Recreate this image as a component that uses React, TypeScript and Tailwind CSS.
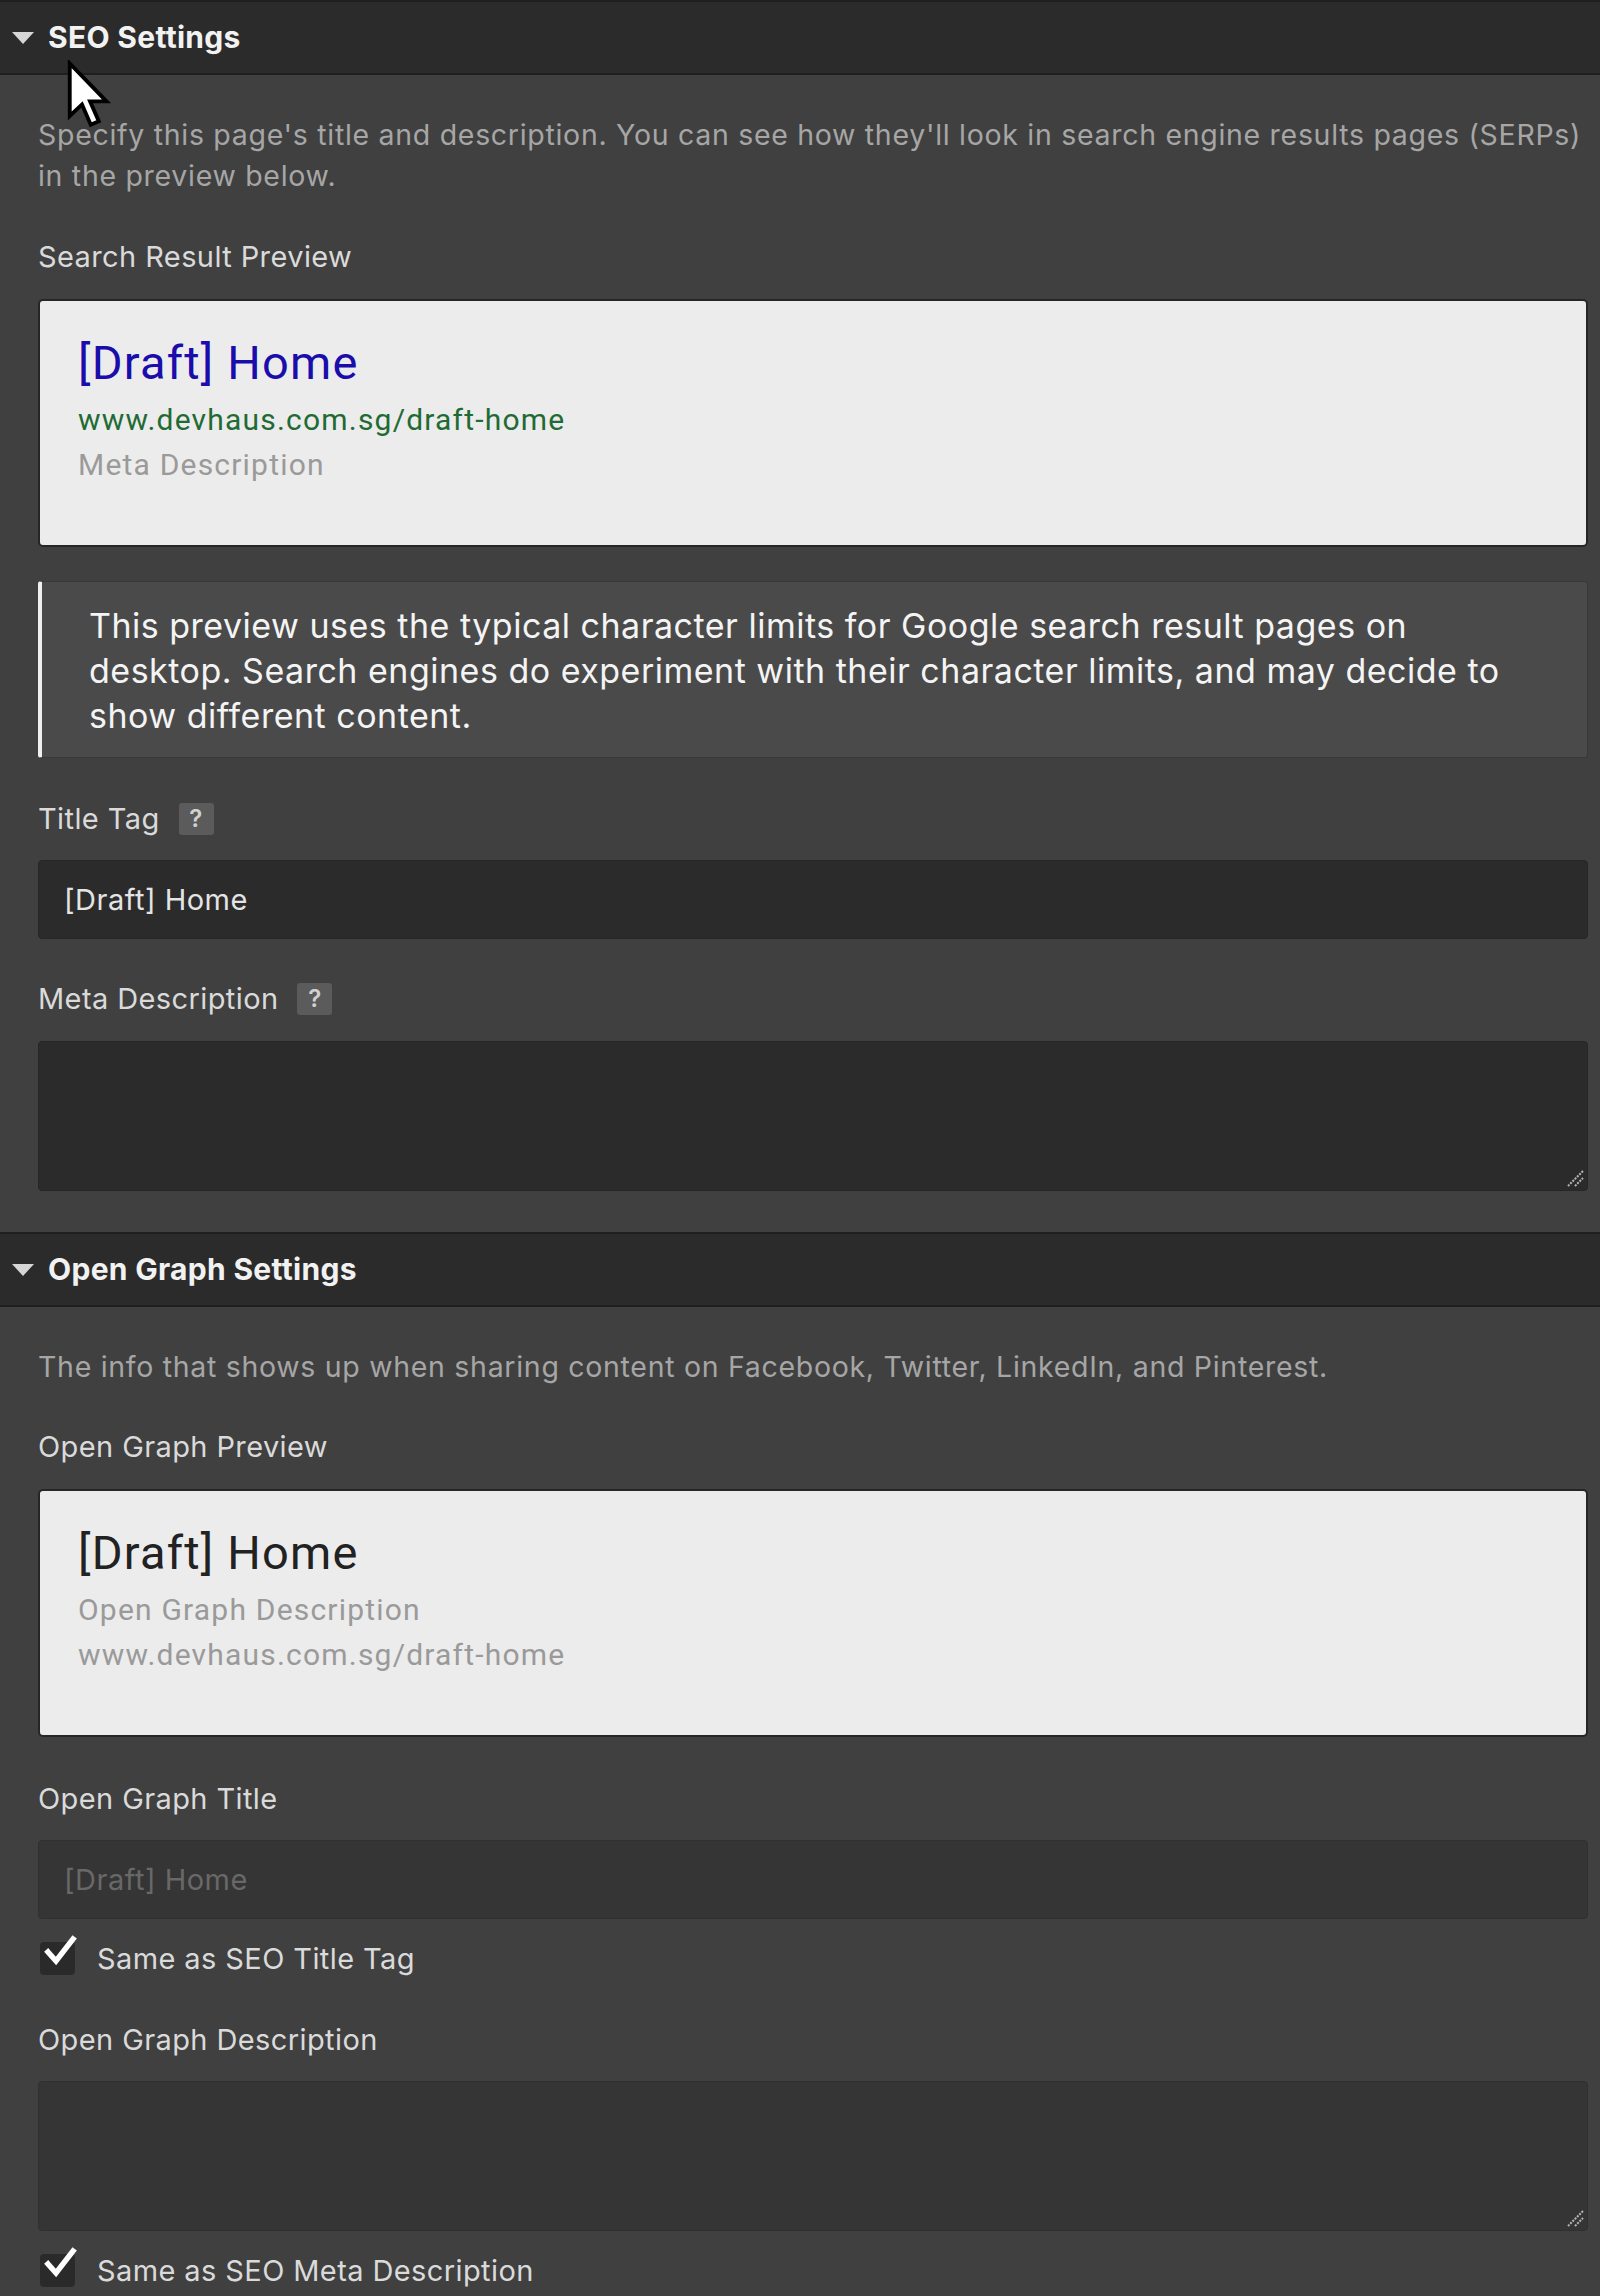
import React from 'react';

const panelFont = { fontFamily: 'Inter, "Noto Sans", sans-serif' };
const cardFont = { fontFamily: 'Roboto, Arial, sans-serif' };

// Collapsible section header bar with the disclosure triangle
const SectionHeader: React.FC<{ title: string }> = ({ title }) => (
  <div className="flex h-[75px] items-center border-y-2 border-[#1f1f1f] bg-[#2b2b2b]">
    <svg width="24" height="14" viewBox="0 0 24 14" className="ml-[11px] mr-[13px]">
      <path d="M1 1 L23 1 L12 13 Z" fill="#d6d6d6" />
    </svg>
    <span className="text-[30px] font-bold tracking-[0.3px] text-[#f2f2f2]">{title}</span>
  </div>
);

const HelpBadge = () => (
  <span className="ml-[19px] inline-flex h-[32px] w-[35px] items-center justify-center rounded-[3px] bg-[#5b5b5b] text-[24px] font-semibold text-[#d0d0d0]">
    ?
  </span>
);

const Label: React.FC<{ text: string; help?: boolean; className?: string }> = ({ text, help, className = '' }) => (
  <div className={`flex h-[41px] items-center text-[29px] tracking-[0.4px] text-[#dadada] ${className}`}>
    {text}
    {help && <HelpBadge />}
  </div>
);

const Checkbox: React.FC<{ label: string; className?: string }> = ({ label, className = '' }) => (
  <div className={`flex h-[41px] items-center ${className}`}>
    <span className="relative ml-[2px] h-[33px] w-[35px] shrink-0 rounded-[4px] bg-[#2a2a2a]">
      <svg width="36" height="34" viewBox="0 0 36 34" className="absolute left-[3px] top-[-8px]">
        <path d="M5 18 L13 27 L30 5" fill="none" stroke="#ffffff" strokeWidth="5.5" strokeLinecap="square" />
      </svg>
    </span>
    <span className="ml-[22px] text-[29px] tracking-[0.4px] text-[#dadada]">{label}</span>
  </div>
);

// Drag grip drawn in the lower right corner of the text areas
const ResizeGrip = () => (
  <svg width="20" height="20" viewBox="0 0 20 20" className="pointer-events-none absolute bottom-[3px] right-[3px]">
    <path d="M3 18 L18 3" stroke="#b5b5b5" strokeWidth="2" strokeDasharray="2 1.2" />
    <path d="M10 18 L18 10" stroke="#b5b5b5" strokeWidth="2" strokeDasharray="2 1.2" />
  </svg>
);

const TextArea: React.FC<{ disabled?: boolean; className?: string }> = ({ disabled, className = '' }) => (
  <div className={`relative ${className}`}>
    <textarea
      readOnly
      disabled={disabled}
      className={`block h-[150px] w-full resize-none rounded-[4px] border px-[25px] py-[18px] text-[29px] text-[#e4e4e4] outline-none ${
        disabled ? 'border-[#303030] bg-[#353535]' : 'border-[#262626] bg-[#2b2b2b]'
      }`}
    />
    <ResizeGrip />
  </div>
);

const Cursor = () => (
  <svg width="46" height="70" viewBox="0 0 13 20" className="absolute left-[66px] top-[60px]">
    <path
      d="M1 1 L1 16 L4.5 12.7 L7 18.5 L9.3 17.5 L6.8 11.8 L11.5 11.8 Z"
      fill="#ffffff"
      stroke="#000000"
      strokeWidth="1.1"
      strokeLinejoin="miter"
    />
  </svg>
);

export default function App() {
  return (
    <div className="relative min-h-[2296px] w-[1600px] bg-[#404040]" style={panelFont}>
      <SectionHeader title="SEO Settings" />
      <Cursor />

      <div className="pb-[41px] pl-[38px] pr-[12px] pt-[39px]">
        <p className="text-[28.5px] leading-[41px] tracking-[0.7px] text-[#a6a6a6]">
          Specify this page's title and description. You can see how they'll look in search engine results pages (SERPs) in the preview below.
        </p>

        <Label text="Search Result Preview" className="mt-[40px]" />

        <div className="mt-[22px] h-[248px] rounded-[5px] border-2 border-[#262626] bg-[#ececec] px-[38px] pt-[34px]" style={cardFont}>
          <div className="text-[47px] leading-[56px] tracking-[1.2px] text-[#1a0dab]">[Draft] Home</div>
          <div className="mt-[6px] text-[30px] leading-[45px] tracking-[1.2px] text-[#1f6b33]">www.devhaus.com.sg/draft-home</div>
          <div className="text-[30px] leading-[45px] tracking-[1.2px] text-[#9a9a9a]">Meta Description</div>
        </div>

        <div className="mt-[34px] h-[177px] rounded-[3px] border border-[#383838] border-l-[4px] border-l-[#f0f0f0] bg-[#4a4a4a] pl-[47px] pr-[63px] pt-[21px] text-[34px] leading-[45px] tracking-[0.5px] text-[#f4f4f4]">
          This preview uses the typical character limits for Google search result pages on desktop. Search engines do experiment with their character limits, and may decide to show different content.
        </div>

        <Label text="Title Tag" help className="mt-[40px]" />
        <input
          readOnly
          defaultValue="[Draft] Home"
          className="mt-[21px] block h-[79px] w-full rounded-[4px] border border-[#262626] bg-[#2b2b2b] px-[25px] text-[29px] tracking-[0.5px] text-[#e4e4e4] outline-none"
        />

        <Label text="Meta Description" help className="mt-[39px]" />
        <TextArea className="mt-[22px]" />
      </div>

      <SectionHeader title="Open Graph Settings" />

      <div className="pb-[6px] pl-[38px] pr-[12px] pt-[39px]">
        <p className="text-[28.5px] leading-[41px] tracking-[0.7px] text-[#a6a6a6]">
          The info that shows up when sharing content on Facebook, Twitter, LinkedIn, and Pinterest.
        </p>

        <Label text="Open Graph Preview" className="mt-[39px]" />

        <div className="mt-[22px] h-[248px] rounded-[5px] border-2 border-[#262626] bg-[#ececec] px-[38px] pt-[34px]" style={cardFont}>
          <div className="text-[47px] leading-[56px] tracking-[1.2px] text-[#222222]">[Draft] Home</div>
          <div className="mt-[6px] text-[30px] leading-[45px] tracking-[1.2px] text-[#9a9a9a]">Open Graph Description</div>
          <div className="text-[30px] leading-[45px] tracking-[1.2px] text-[#9a9a9a]">www.devhaus.com.sg/draft-home</div>
        </div>

        <Label text="Open Graph Title" className="mt-[41px]" />
        <input
          disabled
          placeholder="[Draft] Home"
          className="mt-[21px] block h-[79px] w-full rounded-[4px] border border-[#303030] bg-[#353535] px-[25px] text-[29px] tracking-[0.5px] text-[#e4e4e4] outline-none placeholder:text-[#686868]"
        />
        <Checkbox label="Same as SEO Title Tag" className="mt-[19px]" />

        <Label text="Open Graph Description" className="mt-[40px]" />
        <TextArea disabled className="mt-[21px]" />
        <Checkbox label="Same as SEO Meta Description" className="mt-[19px]" />
      </div>
    </div>
  );
}
